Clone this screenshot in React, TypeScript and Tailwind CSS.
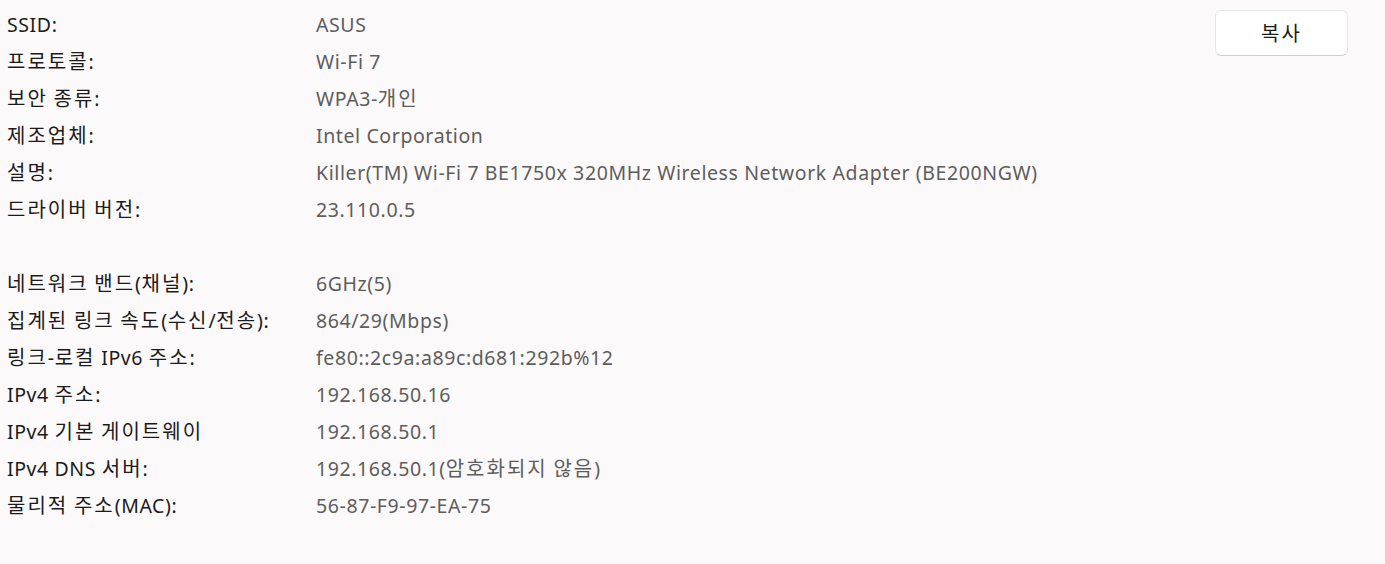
import React from "react";

const group1: [string, string][] = [
  ["SSID:", "ASUS"],
  ["프로토콜:", "Wi-Fi 7"],
  ["보안 종류:", "WPA3-개인"],
  ["제조업체:", "Intel Corporation"],
  ["설명:", "Killer(TM) Wi-Fi 7 BE1750x 320MHz Wireless Network Adapter (BE200NGW)"],
  ["드라이버 버전:", "23.110.0.5"],
];

const group2: [string, string][] = [
  ["네트워크 밴드(채널):", "6GHz(5)"],
  ["집계된 링크 속도(수신/전송):", "864/29(Mbps)"],
  ["링크-로컬 IPv6 주소:", "fe80::2c9a:a89c:d681:292b%12"],
  ["IPv4 주소:", "192.168.50.16"],
  ["IPv4 기본 게이트웨이", "192.168.50.1"],
  ["IPv4 DNS 서버:", "192.168.50.1(암호화되지 않음)"],
  ["물리적 주소(MAC):", "56-87-F9-97-EA-75"],
];

function Txt({ text }: { text: string }) {
  const parts = text.split(/([\uAC00-\uD7A3]+)/);
  return (
    <>
      {parts.map((p, i) =>
        /[\uAC00-\uD7A3]/.test(p) ? (
          <span key={i} className="text-[20px] tracking-[2px]">
            {p}
          </span>
        ) : (
          <span key={i}>{p}</span>
        )
      )}
    </>
  );
}

function Row({ label, value }: { label: string; value: string }) {
  return (
    <div className="flex h-[37px] items-center whitespace-pre">
      <div className="w-[309px] shrink-0 text-[#1b1b1b]">
        <Txt text={label} />
      </div>
      <div className="text-[#5d5d5d]">
        <Txt text={value} />
      </div>
    </div>
  );
}

export default function App() {
  return (
    <div
      className="flex h-[564px] w-[1385px] bg-[#fbf9f9] text-[19.5px] tracking-[0.6px] leading-[37px]"
      style={{ fontFamily: '"Noto Sans", "Noto Sans CJK KR", sans-serif' }}
    >
      <div className="flex flex-1 flex-col pl-[7px] pt-[6px]">
        {group1.map(([l, v]) => (
          <Row key={l} label={l} value={v} />
        ))}
        <div className="h-[37px]" />
        {group2.map(([l, v]) => (
          <Row key={l} label={l} value={v} />
        ))}
      </div>
      <div className="pr-[37px] pt-[10px]">
        <button className="flex h-[46px] w-[133px] items-center justify-center rounded-[6px] border border-[#e6e6e6] border-b-[#cfcfcf] bg-white text-[20px] tracking-[2px] text-[#1b1b1b]">
          복사
        </button>
      </div>
    </div>
  );
}
